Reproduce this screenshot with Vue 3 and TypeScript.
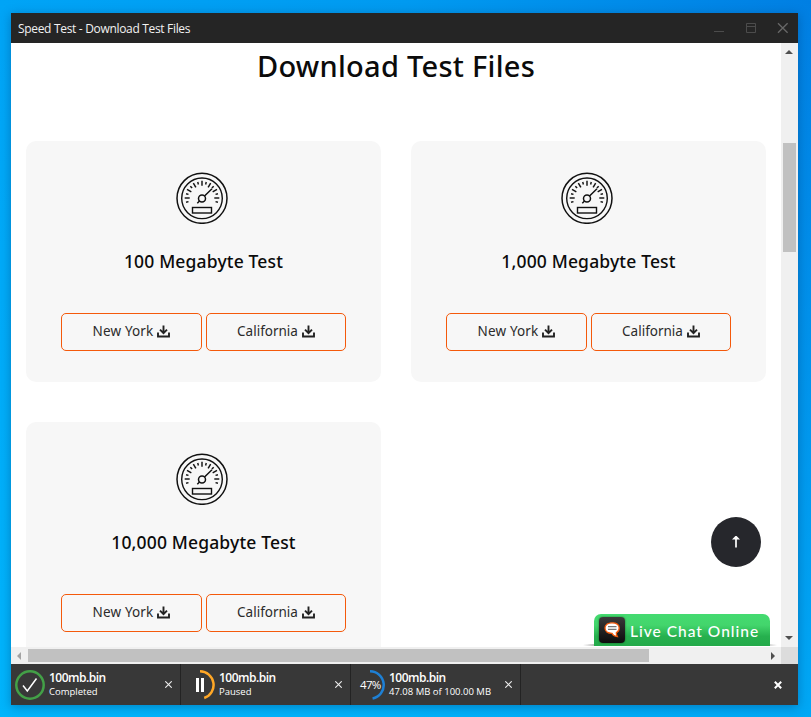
<script setup lang="ts">
interface TestFile {
  size: string
}
interface Download {
  name: string
  detail: string
  state: 'done' | 'paused' | 'active'
}

const tests: TestFile[] = [{ size: '100' }, { size: '1,000' }, { size: '10,000' }]
const mirrors: string[] = ['New York', 'California']
const downloads: Download[] = [
  { name: '100mb.bin', detail: 'Completed', state: 'done' },
  { name: '100mb.bin', detail: 'Paused', state: 'paused' },
  { name: '100mb.bin', detail: '47.08 MB of 100.00 MB', state: 'active' },
]
const ticks: number[] = Array.from({ length: 15 }, (_, i) => -105 + i * 15)
</script>

<template>
  <div class="desktop">
    <div class="window">
      <header class="titlebar">
        <span class="caption">Speed Test - Download Test Files</span>
        <svg class="controls" width="76" height="12" viewBox="0 0 76 12">
          <path d="M1 9.5h10" stroke="#4c4c4c" />
          <path d="M33.5 1.5h9v9h-9zM33 4.5h10" fill="none" stroke="#4c4c4c" />
          <path d="M65 1.200l9.600 9.600M74.600 1.200l-9.600 9.600" stroke="#686868" stroke-width="1.300" />
        </svg>
      </header>

      <div class="body">
        <main class="page">
          <h1>Download Test Files</h1>
          <div class="cards">
            <section v-for="t in tests" :key="t.size" class="card">
              <svg class="gauge" width="52" height="52" viewBox="0 0 52 52" fill="none" stroke="#111">
                <circle cx="26" cy="26.300" r="25" stroke-width="1.500" />
                <circle cx="26" cy="26.300" r="20.300" stroke-width="1.400" />
                <path
                  v-for="(a, i) in ticks"
                  :key="a"
                  :d="i % 2 === 1 ? 'M26 8.700v5' : 'M26 9.500v2.500'"
                  :transform="`rotate(${a} 26 26)`"
                  stroke-width="1.450"
                />
                <circle cx="26" cy="26.500" r="3.500" stroke-width="1.500" />
                <path d="M28.500 24l7.500-7.300M23.500 29l-2.200 2.200" stroke-width="1.500" />
                <rect x="16.500" y="35.500" width="19" height="5.500" stroke-width="1.400" />
              </svg>
              <h2>{{ t.size }} Megabyte Test</h2>
              <div class="mirrors">
                <a v-for="m in mirrors" :key="m" class="mirror">
                  <span class="place">{{ m }}</span>
                  <svg width="13" height="13" viewBox="0 0 13 13" fill="none" stroke="#222">
                    <path d="M6.500 .500v7.500M3 4.700l3.500 3.500L10 4.700" stroke-width="1.900" />
                    <path d="M1 7.500v4h11v-4" stroke-width="1.900" />
                  </svg>
                </a>
              </div>
            </section>
          </div>
          <button class="to-top">
            <svg width="10" height="14" viewBox="0 0 10 14">
              <path d="M5 2v10.500" stroke="#fff" stroke-width="1.700" />
              <path d="M1 4.500L4.400.900h1.200L9 4.500z" fill="#fff" />
            </svg>
          </button>
          <div class="chat-shadow"></div>
          <div class="chat">
            <span class="chat-icon">
              <svg width="20" height="20" viewBox="0 0 20 20">
                <path
                  d="M10 2.800c4.700 0 7.200 2.100 7.200 5.300 0 2.400-1.300 3.900-2.900 4.700 0 1.700.3 2.700 1 3.700-2.800-.3-4.600-1.400-5.300-3.200-4.500 0-7-2.100-7-5.200s2.500-5.300 7-5.300z"
                  fill="#fff" stroke="#f45a0b" stroke-width="1.300"
                />
                <path d="M6 6.700h8.500M6 9.300h8.500" stroke="#777" stroke-width="1.200" />
              </svg>
            </span>
            <span class="chat-label">Live Chat Online</span>
          </div>
        </main>
        <div class="vscroll">
          <svg width="8" height="4" viewBox="0 0 8 4"><path d="M4 0l4 4H0z" fill="#505050" /></svg>
          <div class="vthumb"></div>
          <svg class="down" width="8" height="4" viewBox="0 0 8 4"><path d="M0 0h8L4 4z" fill="#505050" /></svg>
        </div>
      </div>

      <div class="hscroll">
        <div class="htrack">
          <svg width="4" height="8" viewBox="0 0 4 8"><path d="M4 0v8L0 4z" fill="#a3a3a3" /></svg>
          <div class="hthumb"></div>
          <svg class="right" width="4" height="8" viewBox="0 0 4 8"><path d="M0 0l4 4-4 4z" fill="#505050" /></svg>
        </div>
        <div class="corner"></div>
      </div>

      <footer class="downloads">
        <div v-for="(d, i) in downloads" :key="i" class="item">
          <div class="ring">
            <svg width="30" height="30" viewBox="0 0 30 30" fill="none">
              <template v-if="d.state === 'done'">
                <circle cx="15" cy="15" r="13.700" stroke="#43a047" stroke-width="2.500" />
                <path d="M8 15.500l4.300 5.500L21.500 8.500" stroke="#fff" stroke-width="1.500" />
              </template>
              <template v-else-if="d.state === 'paused'">
                <path d="M15 1.300a13.700 13.700 0 0 1 4.200 26.700" stroke="#ffa726" stroke-width="2.500" />
                <path d="M12.500 8v14M17.500 8v14" stroke="#fff" stroke-width="3" />
              </template>
              <path v-else d="M15 1.300a13.700 13.700 0 0 1 2.570 27.160" stroke="#1e80d5" stroke-width="2.500" />
            </svg>
            <span v-if="d.state === 'active'" class="percent">47%</span>
          </div>
          <div class="info">
            <strong>{{ d.name }}</strong>
            <small>{{ d.detail }}</small>
          </div>
          <svg class="dismiss" width="7" height="7" viewBox="0 0 7 7">
            <path d="M.300.300l6.400 6.400M6.700.300L.300 6.700" stroke="#eee" stroke-width="1.100" />
          </svg>
        </div>
        <svg class="close-all" width="8" height="8" viewBox="0 0 8 8">
          <path d="M.800.800l6.400 6.400M7.200.800L.800 7.200" stroke="#fff" stroke-width="2" />
        </svg>
      </footer>
    </div>
  </div>
</template>

<style>
body { margin: 0; overflow: hidden; }
</style>

<style scoped>
* { box-sizing: border-box; }
svg { display: block; flex: none; }
.desktop {
  width: 811px;
  height: 717px;
  padding: 13px 13px 12px 11px;
  background:
    linear-gradient(180deg, rgba(0, 190, 255, 0) 0%, rgba(0, 190, 255, 0.65) 100%),
    linear-gradient(90deg, #00a4f6 0%, #009af0 50%, #007fe3 100%);
}
.window {
  width: 787px;
  height: 692px;
  display: flex;
  flex-direction: column;
  background: #fff;
  box-shadow: 0 2px 10px rgba(0, 40, 90, 0.35);
}
.titlebar {
  height: 30px;
  padding: 0 9px 0 7px;
  display: flex;
  align-items: center;
  justify-content: space-between;
  background: #252525;
  color: #f2f2f2;
  font: 12px/30px "Open Sans", sans-serif;
}
.caption { letter-spacing: -0.32px; padding-top: 1px; }
.body { height: 604px; display: flex; }
.page {
  position: relative;
  width: 770px;
  height: 604px;
  overflow: hidden;
  padding: 0 15px;
  background: #fff;
  font-family: "Noto Sans", sans-serif;
}
h1 {
  margin: 0;
  height: 98px;
  padding-top: 3px;
  text-align: center;
  font-size: 29px;
  line-height: 40px;
  font-weight: 500;
  letter-spacing: 0.27px;
  color: #0b0b0b;
  white-space: nowrap;
}
.cards {
  display: grid;
  grid-template-columns: 355px 355px;
  grid-auto-rows: 241px;
  gap: 40px 30px;
}
.card {
  border-radius: 10px;
  background: #f7f7f7;
  display: flex;
  flex-direction: column;
  align-items: center;
  padding-top: 31px;
}
.gauge { margin-right: 4px; }
h2 {
  margin: 23px 0 0;
  height: 29px;
  font-size: 17.5px;
  line-height: 28px;
  font-weight: 500;
  letter-spacing: 0.16px;
  color: #0b0b0b;
  white-space: nowrap;
}
.mirrors { display: flex; gap: 4px; margin-top: 37px; }
.mirror {
  width: 141px;
  height: 38px;
  display: flex;
  align-items: center;
  justify-content: center;
  gap: 4px;
  padding-bottom: 1px;
  border: 1px solid #f4590b;
  border-radius: 5px;
  color: #2b2b2b;
  font-size: 13.5px;
  line-height: 20px;
}
.mirror:first-child { letter-spacing: 0.15px; }
.mirror + .mirror { width: 140px; }
.place { padding-bottom: 1px; white-space: nowrap; }
.to-top {
  position: absolute;
  left: 700px;
  top: 474px;
  width: 50px;
  height: 50px;
  padding: 0;
  border: 0;
  border-radius: 50%;
  background: #26272c;
  display: flex;
  align-items: center;
  justify-content: center;
}
.chat-shadow {
  position: absolute;
  left: 572px;
  top: 600px;
  width: 194px;
  height: 3px;
  border-radius: 50% 50% 0 0;
  background: linear-gradient(90deg, transparent, #888 12px, #888 182px, transparent);
  opacity: 0.6;
}
.chat {
  position: absolute;
  left: 583px;
  top: 571px;
  width: 176px;
  height: 32px;
  padding-left: 5px;
  display: flex;
  align-items: center;
  gap: 5px;
  border-radius: 7px 7px 0 0;
  background: linear-gradient(#44db70 0%, #43d56c 35%, #26b04e 70%, #24aa4a 100%);
}
.chat-icon {
  width: 26px;
  height: 26px;
  flex: none;
  display: flex;
  align-items: center;
  justify-content: center;
  border-radius: 4px;
  background: linear-gradient(#3a3a3a, #0c0c0c);
  box-shadow: 0 0 2px rgba(0, 50, 0, 0.7);
}
.chat-label {
  color: #fff;
  font: 500 15.5px/20px Lato, sans-serif;
  letter-spacing: 1px;
  white-space: nowrap;
  padding-top: 1px;
}
.vscroll {
  width: 17px;
  background: #f0f0f0;
  display: flex;
  flex-direction: column;
  align-items: center;
  padding: 7px 0 7px;
}
.vscroll svg { margin-right: 1px; }
.vthumb { width: 13px; height: 109px; margin-top: 89px; background: #c1c1c1; }
.down { margin-top: auto; }
.hscroll { height: 17px; display: flex; }
.htrack { width: 770px; padding: 0 6px 0 6px; display: flex; align-items: center; background: #f0f0f0; }
.hthumb { width: 621px; height: 13px; margin-left: 7px; background: #c1c1c1; }
.right { margin-left: auto; }
.corner { width: 17px; background: #dcdcdc; }
.downloads {
  height: 41px;
  display: flex;
  align-items: center;
  background: #383838;
  color: #fff;
  font-family: "Open Sans", sans-serif;
}
.item {
  width: 170px;
  height: 41px;
  padding: 0 8px 0 4px;
  display: flex;
  align-items: center;
  border-right: 1px solid #232323;
}
.ring { position: relative; width: 30px; height: 30px; flex: none; }
.percent { position: absolute; left: 5px; top: 6px; font-size: 11.5px; line-height: 17px; letter-spacing: -0.7px; }
.info { margin-left: 4px; padding-bottom: 1px; display: flex; flex-direction: column; white-space: nowrap; }
.info strong { font-size: 12px; line-height: 15px; font-weight: 600; letter-spacing: -0.5px; }
.info small { font-size: 9.5px; line-height: 14px; }
.dismiss { margin-left: auto; }
.close-all { margin: 0 16px 0 auto; }
</style>
